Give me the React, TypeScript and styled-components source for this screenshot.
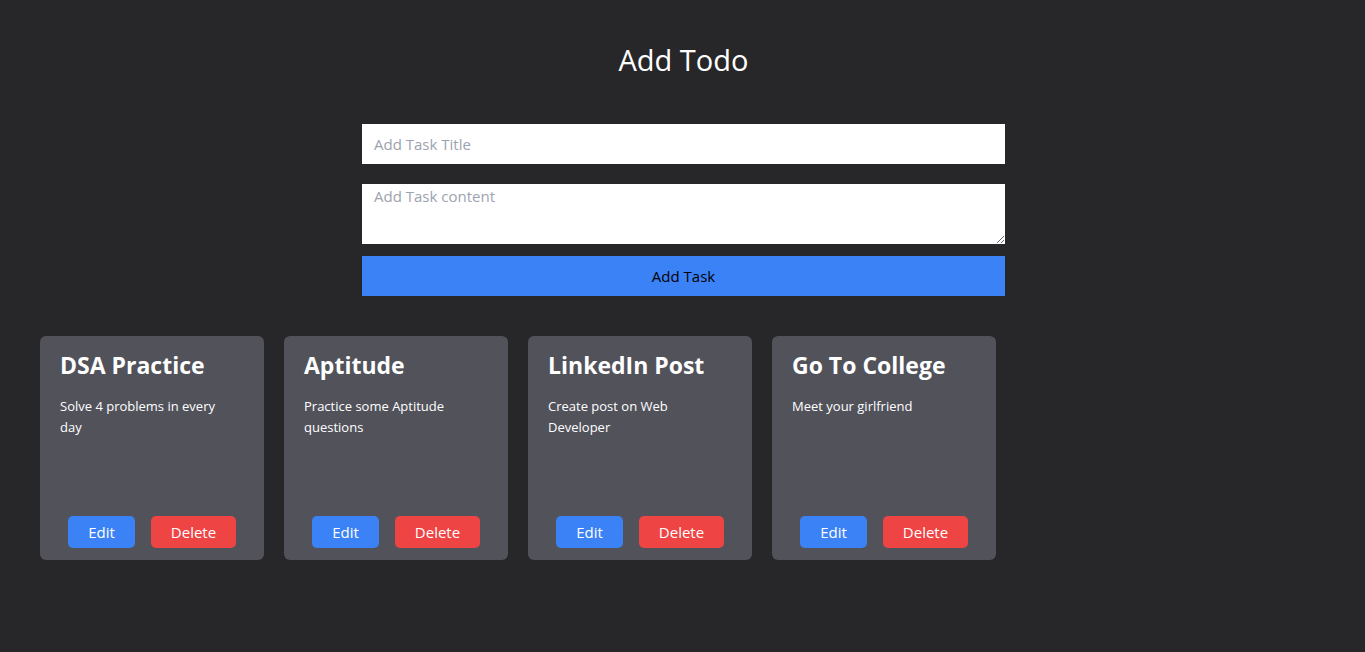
import React from "react";
import styled, { createGlobalStyle } from "styled-components";

const GlobalStyle = createGlobalStyle`
  * { box-sizing: border-box; }
  html, body { margin: 0; padding: 0; background: #27272a; }
  body { font-family: "Open Sans", "Noto Sans", sans-serif; }
`;

const Page = styled.div`
  min-height: 100vh;
  background: #27272a;
  color: #ffffff;
  padding: 40px 40px;
`;

const Title = styled.h1`
  margin: 0;
  text-align: center;
  font-size: 29px;
  font-weight: 400;
  line-height: 40px;
  padding-left: 2px;
`;

const Form = styled.form`
  width: 643px;
  margin: 44px 0 0 322px;
  display: flex;
  flex-direction: column;
`;

const TextInput = styled.input`
  height: 40px;
  border: none;
  outline: none;
  padding: 0 12px;
  font-family: inherit;
  font-size: 15px;
  color: #111;
  background: #fff;
  &::placeholder { color: #9ca3af; }
`;

const TextArea = styled.textarea`
  height: 60px;
  margin-top: 20px;
  border: none;
  outline: none;
  padding: 0 12px;
  font-family: inherit;
  font-size: 15px;
  line-height: 24px;
  color: #111;
  background: #fff;
  resize: vertical;
  display: block;
  &::placeholder { color: #9ca3af; }
`;

const SubmitButton = styled.button`
  height: 40px;
  margin-top: 12px;
  border: none;
  background: #3b82f6;
  color: #000;
  font-family: inherit;
  font-size: 15px;
  cursor: pointer;
`;

const Grid = styled.div`
  display: flex;
  gap: 20px;
  margin-top: 40px;
`;

const Card = styled.div`
  width: 224px;
  height: 224px;
  background: #52525b;
  border-radius: 6px;
  padding: 13px 20px 12px;
  display: flex;
  flex-direction: column;
`;

const CardTitle = styled.h2`
  margin: 0;
  font-size: 23px;
  font-weight: 700;
  line-height: 32px;
  white-space: nowrap;
`;

const CardText = styled.p`
  margin: 15px 0 0;
  font-size: 13px;
  line-height: 21px;
  padding-right: 12px;
`;

const Actions = styled.div`
  margin-top: auto;
  display: flex;
  justify-content: center;
  gap: 16px;
`;

const ActionButton = styled.button<{ $variant: "edit" | "delete" }>`
  height: 32px;
  width: ${(p) => (p.$variant === "edit" ? "67px" : "85px")};
  border: none;
  border-radius: 5px;
  background: ${(p) => (p.$variant === "edit" ? "#3b82f6" : "#ef4444")};
  color: #fff;
  font-family: inherit;
  font-size: 15px;
  cursor: pointer;
`;

const todos = [
  { title: "DSA Practice", content: "Solve 4 problems in every day" },
  { title: "Aptitude", content: "Practice some Aptitude questions" },
  { title: "LinkedIn Post", content: "Create post on Web Developer" },
  { title: "Go To College", content: "Meet your girlfriend" },
];

export default function App() {
  return (
    <>
      <GlobalStyle />
      <Page>
        <Title>Add Todo</Title>
        <Form onSubmit={(e) => e.preventDefault()}>
          <TextInput placeholder="Add Task Title" />
          <TextArea placeholder="Add Task content" />
          <SubmitButton type="submit">Add Task</SubmitButton>
        </Form>
        <Grid>
          {todos.map((t) => (
            <Card key={t.title}>
              <CardTitle>{t.title}</CardTitle>
              <CardText>{t.content}</CardText>
              <Actions>
                <ActionButton $variant="edit">Edit</ActionButton>
                <ActionButton $variant="delete">Delete</ActionButton>
              </Actions>
            </Card>
          ))}
        </Grid>
      </Page>
    </>
  );
}
